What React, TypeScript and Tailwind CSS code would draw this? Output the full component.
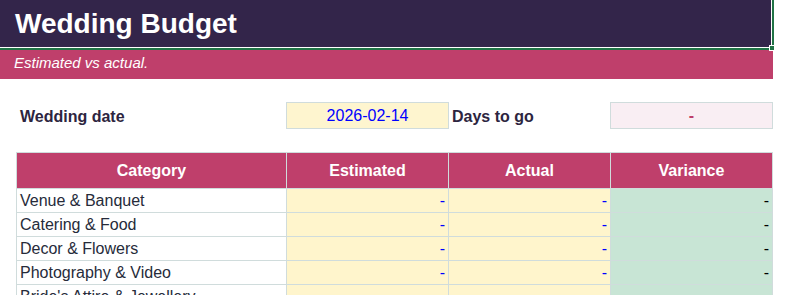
import React from "react";

const font = { fontFamily: '"Liberation Sans", Arial, sans-serif' };

const categories = [
  "Venue & Banquet",
  "Catering & Food",
  "Decor & Flowers",
  "Photography & Video",
  "Bride's Attire & Jewellery",
];

const headers = ["Category", "Estimated", "Actual", "Variance"];

export default function App() {
  return (
    <div className="w-[810px] h-[295px] overflow-hidden bg-white" style={font}>
      {/* Title band with selected-cell frame */}
      <div className="relative w-[774px]">
        <div className="h-[50px] bg-white border-r-2 border-b-2 border-[#217346]">
          <div className="w-[771px] h-[47px] bg-[#33254a] pl-[15px] text-[28px] leading-[47px] font-bold text-white">
            Wedding Budget
          </div>
        </div>
        <div className="absolute left-[769px] top-[45px] w-[6px] h-[6px] bg-[#217346] border border-white" />
      </div>

      {/* Subtitle band */}
      <div className="w-[773px] h-[29px] bg-[#bf3f6b] pl-[14px] text-[15px] leading-[26px] italic text-white">
        Estimated vs actual.
      </div>

      {/* Date row */}
      <div className="flex items-center mt-[23px] h-[27px]">
        <div className="w-[286px] pl-[20px] pt-[2px] text-[16px] font-bold text-[#2d2540]">
          Wedding date
        </div>
        <div className="w-[163px] h-[27px] flex items-center justify-center bg-[#fef5cf] border border-[#d0dcdc] text-[16px] text-[#0000ff]">
          2026-02-14
        </div>
        <div className="w-[161px] pl-[3px] pt-[2px] text-[16px] font-bold text-[#2d2540]">
          Days to go
        </div>
        <div className="w-[163px] h-[27px] flex items-center justify-center bg-[#f9eef3] border border-[#d0dcdc] text-[16px] font-bold text-[#be3e6a]">
          -
        </div>
      </div>

      {/* Budget table */}
      <div className="ml-[16px] mt-[23px] w-[757px] grid grid-cols-[269px_161px_161px_161px] grid-rows-[35px_repeat(5,23px)] gap-px p-px bg-[#d0dcdc]">
        {headers.map((h) => (
          <div
            key={h}
            className="flex items-center justify-center bg-[#bf3f6b] text-[16px] font-bold text-white"
          >
            {h}
          </div>
        ))}
        {categories.map((c) => (
          <React.Fragment key={c}>
            <div className="flex items-center pl-[3px] bg-white text-[16px] text-[#262b3a] whitespace-nowrap">
              {c}
            </div>
            <div className="flex items-center justify-end pr-[3px] bg-[#fff5cc] text-[16px] text-[#0000ff]">
              -
            </div>
            <div className="flex items-center justify-end pr-[3px] bg-[#fff5cc] text-[16px] text-[#0000ff]">
              -
            </div>
            <div className="flex items-center justify-end pr-[3px] bg-[#c8e5d5] text-[16px] text-black">
              -
            </div>
          </React.Fragment>
        ))}
      </div>
    </div>
  );
}
